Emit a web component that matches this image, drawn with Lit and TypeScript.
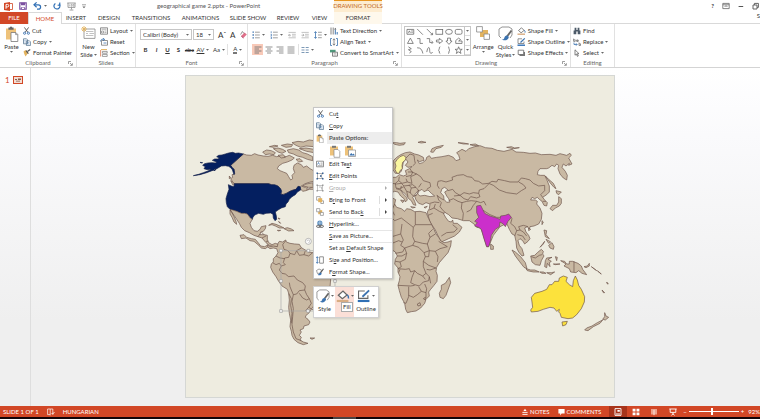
import { LitElement, html, svg, css, nothing } from "lit";
import { customElement, property } from "lit/decorators.js";
import { classMap } from "lit/directives/class-map.js";

const BLUE = "#3c73b0";
const TAN = "#e3b35e";

/* Icon artwork: [width, height, drawing] */
const ICONS: Record<string, [number, number, unknown]> = {
  logo: [9, 9, svg`<path d="M0 1 6 0v9L0 8z" fill="#d24726"/><path d="M6 1.5h2.5v6H6" fill="#fff" stroke="#d24726" stroke-width=".8"/><path d="M2 6.8V2.4h1.5a1.2 1.2 0 0 1 0 2.5H2" fill="none" stroke="#fff"/>`],
  save: [8, 8, svg`<path d="M.8.8h6.4v6.4H.8z" fill="#fff" stroke="#7b4fa0" stroke-width="1.2"/><path d="M2 .8h4v2.4H2zM2.3 5h3.4v2.4H2.3z" fill="#7b4fa0"/><path d="M3 5.6h2v1.4H3z" fill="#fff"/>`],
  undo: [9, 8, svg`<path d="M1.4 2.8h4a2.1 2.1 0 0 1 0 4.4H4" fill="none" stroke="#2f6fb5" stroke-width="1.2"/><path d="M3.6.4 1 2.8l2.6 2.4" fill="none" stroke="#2f6fb5" stroke-width="1.2"/>`],
  redo: [8, 8, svg`<path d="M2.4 1.4A3 3 0 1 0 6 1.8" fill="none" stroke="#2f6fb5" stroke-width="1.2"/><path d="M4.6 3.2h2.2V.4" fill="none" stroke="#2f6fb5" stroke-width="1.1"/>`],
  show: [9, 9, svg`<path d="M.3 1h8.400M1 1v4.400h7V1M4.500 5.400v2M2.600 8h3.800" fill="none" stroke="#888" stroke-width=".8"/><path d="M2.400 2.400v1.800M4 2.400h1v1.800H4zM6 2.400h1v1.800H6z" fill="none" stroke="#888" stroke-width=".5"/>`],
  more: [4, 5, svg`<path d="M0 .8h4" stroke="#777" stroke-width=".7"/><path d="M.4 2.400h3.200L2 4.200z" fill="#666"/>`],
  caret: [3, 2, svg`<path d="M0 0h3L1.500 1.800z" fill="#666"/>`],
  ribbonopt: [8, 8, svg`<path d="M.8 1.400h6.400v5.200H.8zM.8 2.800h6.400" fill="none" stroke="#666" stroke-width=".8"/><path d="M2.600 5 4 3.600 5.400 5" fill="none" stroke="#666" stroke-width=".8"/>`],
  minimize: [6, 8, svg`<path d="M.6 4.500h4.600" stroke="#555"/>`],
  restore: [7, 8, svg`<path d="M1 3h4v4H1zM2.400 3V1.400h4v4H5" fill="none" stroke="#555" stroke-width=".9"/>`],
  paste: [14, 16, svg`<path d="M1 2.500h10v11H1z" fill="#eec27a"/><path d="M3.400 1.400h1.400a1.300 1.300 0 0 1 2.400 0h1.400v2.400H3.400z" fill="#666"/><path d="M6 6.500h4.800l2 2v7H6z" fill="#fff" stroke="#777" stroke-width=".8"/><path d="M10.600 6.600v2h2" fill="none" stroke="#777" stroke-width=".7"/>`],
  cut: [7, 8, svg`<path d="M1.400.4 4.800 5.200M5.600.4 2.200 5.200" stroke="#555" stroke-width=".9"/><circle cx="1.600" cy="6.200" r="1.100" fill="none" stroke="${BLUE}" stroke-width=".9"/><circle cx="5.400" cy="6.200" r="1.100" fill="none" stroke="${BLUE}" stroke-width=".9"/>`],
  copy: [8, 8, svg`<path d="M.5.8h3l1 1v4h-4zM3.400 2.800h3l1 1v3.800h-4z" fill="#fff" stroke="#5b7894" stroke-width=".8"/><path d="M4.300 4.600h2M4.300 6h2M1.300 2.400h1.400M1.300 4h1.400" stroke="${BLUE}" stroke-width=".5"/>`],
  painter: [8, 8, svg`<path d="M.6 2.200 3 1l2 3-2.400 3.400C1.600 6 .8 4.200.6 2.200z" fill="${TAN}"/><path d="m3 1.600 2.400 3" stroke="#555" stroke-width="1.200"/><path d="m4.400 2.600 2.800-2" stroke="#555" stroke-width="1.200"/>`],
  newslide: [15, 13, svg`<path d="M3 3h11v9.400H3z" fill="#fff" stroke="#888" stroke-width=".8"/><path d="M5 5.500h7.400M8.500 7.500H13M5 9.500h7.400M5 7.500h2" stroke="#999" stroke-width=".6"/><path d="M3 0v6M0 3h6M1 1l4 4M5 1 1 5" stroke="${TAN}" stroke-width=".9"/>`],
  layout: [8, 8, svg`<path d="M.5.800h7v6.400h-7z" fill="#fff" stroke="#777" stroke-width=".8"/><path d="M1.500 2.200h5M1.500 4h2v2h-2zM4.500 4h2M4.500 5.600h2" fill="none" stroke="#777" stroke-width=".6"/>`],
  reset: [8, 8, svg`<path d="M1.500 2.500h6v4.700h-6z" fill="#fff" stroke="#777" stroke-width=".8"/><path d="M.400 3.500C.600 1.500 2.500.6 4.400 1.400M2.800 0l1.800 1.400L3 3M3.500 5h3" fill="none" stroke="${BLUE}" stroke-width=".8"/>`],
  section: [8, 8, svg`<path d="M1 .6h6" stroke="${TAN}"/><path d="M.6 1v6.500" stroke="#d9774e" stroke-width=".8"/><path d="M2.400 2.400h4.800v1.800H2.400zM2.400 5.400h4.800v2H2.400z" fill="#fff" stroke="#777" stroke-width=".7"/>`],
  clear: [8, 8, svg`<path d="M1.200 5 4.600 1.400l2.200 2L3.400 7z" fill="#e0708a"/><path d="M1.200 5 3.400 7" stroke="#b3486a"/><path d="m.6 3.500 1.800-3 1.600 2" fill="none" stroke="#666" stroke-width=".7"/>`],
  bullets: [8, 8, svg`<path d="M.500 1.200h1.400M.500 4h1.400M.500 6.800h1.400" stroke="${BLUE}" stroke-width="1.300"/><path d="M3 1.200h4.800M3 4h4.800M3 6.800h4.800" stroke="#888" stroke-width=".8"/>`],
  numbers: [8, 8, svg`<path d="M1.200.300v1.800M.6 3.300h1v1.500h-1M.6 6h1v1.800h-1" fill="none" stroke="${BLUE}" stroke-width=".7"/><path d="M3 1.200h4.800M3 4h4.800M3 6.800h4.800" stroke="#888" stroke-width=".8"/>`],
  outdent: [8, 8, svg`<path d="M.5 1.400h7.300M4 3.300h3.800M4 5h3.800M.5 6.800h7.300" stroke="#aaa" stroke-width=".7"/><path d="M3 4.200H.500M1.700 3 .5 4.200l1.200 1.200" fill="none" stroke="#999" stroke-width=".7"/>`],
  indent: [8, 8, svg`<path d="M.5 1.400h7.300M4 3.300h3.800M4 5h3.800M.5 6.800h7.300" stroke="#aaa" stroke-width=".7"/><path d="M.5 4.200H3M1.800 3 3 4.200 1.800 5.400" fill="none" stroke="#999" stroke-width=".7"/>`],
  spacing: [8, 8, svg`<path d="M1.500.8v6.400M.3 2 1.500.6 2.700 2M.3 6l1.200 1.400L2.700 6" fill="none" stroke="${BLUE}" stroke-width=".8"/><path d="M4 1.300h3.800M4 4h3.800M4 6.700h3.800" stroke="#888" stroke-width=".8"/>`],
  left: [8, 8, svg`<path d="M.5 1h7M.5 3h4.500M.5 5h7M.5 7h4.500" stroke="#777" stroke-width=".9"/>`],
  center: [8, 8, svg`<path d="M.5 1h7M2 3h4M.5 5h7M2 7h4" stroke="#777" stroke-width=".8"/>`],
  right: [8, 8, svg`<path d="M.5 1h7M3 3h4.500M.5 5h7M3 7h4.500" stroke="#777" stroke-width=".8"/>`],
  justify: [8, 8, svg`<path d="M.5 1h7M.5 3h7M.5 5h7M.5 7h7" stroke="#777" stroke-width=".8"/>`],
  columns: [8, 8, svg`<path d="M.5 1.500h3M.5 4h3M.5 6.500h3M4.700 1.500h3M4.700 4h3M4.700 6.500h3" stroke="#6d8dae" stroke-width=".9"/>`],
  textdir: [8, 8, svg`<path d="M1 .5v7M3.200.5v7" stroke="#777" stroke-width=".9"/><path d="M5.300 7.500v-5M7.200 7.500V5" stroke="${BLUE}"/><path d="m4.200 2.500 1-1.800 1.200 1.800" fill="#555"/>`],
  aligntext: [8, 8, svg`<path d="M2 .5H.5v7H2M6 .5h1.500v7H6" fill="none" stroke="${BLUE}" stroke-width=".8"/><path d="M4 .8v6.400M2.800 2.200 4 .8l1.200 1.400M2.800 5.800 4 7.200l1.200-1.400" fill="none" stroke="#666" stroke-width=".7"/>`],
  smartart: [8, 8, svg`<path d="M0 .8h5.600v2.600H0z" fill="#4d9a7c"/><path d="M2.500 3.200h5v4h-5z" fill="#fff" stroke="#666" stroke-width=".8"/><path d="M3.600 4.700h2.800M3.600 6h2.800" stroke="#777" stroke-width=".5"/>`],
  arrange: [14, 14, svg`<path d="M4 4h8v7H4z" fill="${TAN}"/><path d="M.6.6h5.800v5.400H.6zM8 8h5.500v5.400H8z" fill="#fff" stroke="#888" stroke-width=".8"/>`],
  quick: [15, 15, svg`<path d="M4 1h7l3 2v6l-2 3M3 12 1 10V3l3-2" fill="none" stroke="#888" stroke-width=".9"/><path d="m13.500 4.500-4.500 6" stroke="#666" stroke-width="1.800"/><path d="M9.600 9.600c-2-.3-3 1-3.500 3-.5 1-1.800 1-2.600.6 2 2 7 1.400 7.300-2.200z" fill="${BLUE}"/>`],
  fill: [9, 8, svg`<path d="M1.500 3.500 4.500.8l2.600 2.600-3 2.400z" fill="#fff" stroke="#666" stroke-width=".8"/><path d="M7.200 3.200c1 .8 1 1.600.8 2.400" fill="none" stroke="${BLUE}"/><path d="M.5 7.200h7.500" stroke="#d9ad83" stroke-width="1.400"/>`],
  outline: [9, 8, svg`<path d="M5 .8H1v4.700h6V3.500" fill="none" stroke="#666" stroke-width=".7"/><path d="M3.500 4.500 7.800.4" stroke="${BLUE}" stroke-width="1.200"/><path d="M.5 7.200h7.500" stroke="#2f6fb5" stroke-width="1.400"/>`],
  effects: [9, 8, svg`<path d="M2.500 3h5.500v4H2.500z" fill="#777"/><path d="M1.200 1.200h5.500v4.300H1.200z" fill="#fff" stroke="#666" stroke-width=".8"/>`],
  find: [8, 8, svg`<path d="M1.600.8h1.800v3H1.600zM4.600.8h1.800v3H4.600zM.6 3.500h2.700v3.700H.6zM4.700 3.500h2.700v3.700H4.700zM3 3h2v1.600H3z" fill="#4d5b69"/>`],
  replace: [8, 8, svg`<path d="M.6.600v2.800h1.600V1.800H.6M5 1.800v1.600H3.600V2H5v1.600M6 4.500v3h1.500V5.800H6" fill="none" stroke="#666" stroke-width=".7"/><path d="M1 4.500v2h3M3 5.300l1.200 1.200L3 7.700" fill="none" stroke="${BLUE}" stroke-width=".8"/>`],
  select: [8, 8, svg`<path d="M2 .8v5.400l1.400-1.200 1 2.400.9-.4-1-2.300H6z" fill="#fff" stroke="#666" stroke-width=".8"/>`],
  launcher: [5, 5, svg`<path d="M.5 3V.5H3M2 2l2 2M4.400 2.200v2.200H2.200" fill="none" stroke="#777" stroke-width=".7"/>`],
  edittext: [8, 8, svg`<path d="M.5 1.200h7v5.600h-7z" fill="#fff" stroke="#777" stroke-width=".8"/><path d="m1.500 4.500 1-2 1 2" fill="none" stroke="${BLUE}" stroke-width=".7"/><path d="M4.600 3h2M4.600 4.200h2M1.600 5.600h5" stroke="#888" stroke-width=".6"/>`],
  editpoints: [8, 8, svg`<path d="m1.500 1.500 5 0L5 4l1.500 2.500h-5z" fill="none" stroke="#777" stroke-width=".6"/><path d="M.5.5H2V2H.5zM6 .5h1.500V2H6zM.5 6H2v1.500H.5zM6 6h1.500v1.500H6zM4 3.200h1.500v1.500H4z" fill="#345e92"/>`],
  group: [8, 8, svg`<path d="M1.500 1.500h5v5h-5zM3 3h2.500v2.500" fill="none" stroke="#aaa" stroke-width=".7"/><path d="M.5.5H2V2H.5zM6 .5h1.500V2H6zM.5 6H2v1.500H.5zM6 6h1.500v1.500H6z" fill="#999"/>`],
  front: [8, 8, svg`<path d="M.6.6h3.600v3.600H.6zM4.800 4.800h2.700v2.700H4.800z" fill="#fff" stroke="#888" stroke-width=".7"/><path d="M2.200 2.200h4v4h-4z" fill="${TAN}"/>`],
  back: [8, 8, svg`<path d="M2.200 2.200h4v4h-4z" fill="${TAN}"/><path d="M.6.6h3.200v3.200H.6zM4.400 4.400h3v3h-3z" fill="#fff" stroke="#888" stroke-width=".7"/>`],
  link: [8, 8, svg`<circle cx="3.800" cy="3" r="2.600" fill="#5b8fbe"/><path d="M1.300 3h5M3.800.5v5" stroke="#dce9f4" stroke-width=".5"/><path d="M1.600 5.300h1.800a1 1 0 0 1 0 2H1.600a1 1 0 0 1 0-2zM4.600 5.300h1.800a1 1 0 0 1 0 2H4.600a1 1 0 0 1 0-2z" fill="#fff" stroke="#444" stroke-width=".8"/>`],
  size: [8, 8, svg`<path d="M3.600.8h3.800v6.400H3.600z" fill="#fff" stroke="#777" stroke-width=".8"/><path d="M1.300 1v6M.3 2 1.300.6 2.300 2M.3 6l1 1.400L2.300 6" fill="none" stroke="${BLUE}" stroke-width=".8"/>`],
  format: [8, 8, svg`<path d="M.5 2.500 3 1l2.500 1-1 3-3 .5z" fill="#fff" stroke="#777" stroke-width=".7"/><path d="M7.500.8 4.500 5" stroke="#555" stroke-width="1.100"/><path d="M4.700 4.500C3 4.500 3.400 6.600 1.600 6.800 3.400 8 5.600 7 5.700 5.500z" fill="${BLUE}"/>`],
  pastepic: [12, 13, svg`<path d="M1 1.500h8v9H1z" fill="#eec27a"/><path d="M3 .8h4v2H3z" fill="#777"/><path d="M4.500 5h7v6.500h-7z" fill="#fff" stroke="#888" stroke-width=".7"/><path d="m5.200 10.500 2-2.500 1.500 1.500 1-1 1.200 2z" fill="${BLUE}"/>`],
  pastekeep: [12, 13, svg`<path d="M1 1.500h8v9H1z" fill="#eec27a"/><path d="M3 .8h4v2H3z" fill="#777"/><path d="M5 4.500h4l1.800 1.800v6H5z" fill="#fff" stroke="#888" stroke-width=".7"/>`],
  spell: [8, 8, svg`<path d="M.6 1h2.600v5.600H.6zM3.200 1h2.600v5.600M3.200 6.600v.8" fill="none" stroke="#fff" stroke-width=".7"/><path d="m4.600 5 1 1.200L7.500 4" fill="none" stroke="#fff" stroke-width=".8"/>`],
  notes: [6, 8, svg`<path d="M3 .8 4.600 3H1.400z" fill="#fff"/><path d="M.4 4.400h5.200M.4 6.400h5.200" stroke="#fff" stroke-width=".9"/>`],
  comment: [7, 8, svg`<path d="M.4 1h6.200v4.600H3.600L2.200 7.500V5.600H.4z" fill="#fff"/>`],
  normal: [8, 8, svg`<path d="M1 .6h6v6.800H1z" fill="none" stroke="#fff" stroke-width=".9"/><path d="M3.400 2h2.400v1.800H3.400zM2 5.500h4v.9H2z" fill="#fff"/>`],
  sorter: [8, 8, svg`<path d="M.6.800h2.900v2.700H.6zM4.500.800h2.900v2.700H4.500zM.6 4.500h2.900v2.700H.6zM4.500 4.500h2.900v2.700H4.500z" fill="#fff"/>`],
  reading: [8, 8, svg`<path d="M1 1h2.400L4 1.500 4.600 1H7v5.600H4.600L4 7.200l-.6-.6H1z" fill="#eda08b"/><path d="M4 1.500v5.700" stroke="#fff" stroke-width=".7"/>`],
  play: [8, 8, svg`<path d="M.3 1h7.400M1.200 1v3.400h5.600V1M4 4.400V6.600M2.400 7.300 4 5.800l1.600 1.500" fill="none" stroke="#fff" stroke-width=".9"/>`],
};

const icon = (name: string) => {
  const [w, h, art] = ICONS[name];
  return html`<svg class="ico" width=${w} height=${h} viewBox="0 0 ${w} ${h}" aria-hidden="true">${art}</svg>`;
};
const drop = icon("caret");

const sharedStyles = css`
  :host { font-family: Lato, "Open Sans", sans-serif; font-size: 6px; line-height: 8px; color: #333; }
  * { box-sizing: border-box; }
  button, select, input { font: inherit; color: inherit; margin: 0; padding: 0; border: 0; background: none; border-radius: 0; }
  button { display: flex; align-items: center; white-space: nowrap; }
  .ico { display: block; flex: none; }
`;

/* ---------- World map ---------- */

const line = (d: string) => svg`<path class="border" d=${d} />`;

@customElement("world-map")
class WorldMap extends LitElement {
  static styles = css`
    :host { display: block; }
    .map { display: block; width: 100%; height: auto; }
    path { fill: #c9b9a3; stroke: #6b5148; stroke-width: 2; stroke-linejoin: round; }
    .border { fill: none; }
    .sea { fill: #eeece0; }
    .navy { fill: #041f60; stroke: #14204a; }
    .pale { fill: #fbf7a0; }
    .magenta { fill: #cb2fcb; }
    .yellow { fill: #fce23c; }
    .frame { fill: none; stroke: #a9a9a9; stroke-width: 2; }
    .knob { fill: #fff; stroke: #9a9a9a; stroke-width: 2; }
  `;
  render() {
    return html`<svg class="map" viewBox="186 76 428 321" role="img" aria-label="World map">
      <g transform="translate(186 130) scale(.33333)">
        <path d="M172 72 182 75 196 76 206 71 216 75 232 78 246 79 260 76 272 80 286 77 300 80 310 76 318 80 325 84 318 90 304 96 290 100 278 108 274 116 282 122 292 126 302 130 308 140 314 150 320 146 318 136 326 128 322 116 324 106 334 99 346 104 352 112 362 108 372 116 390 126 390 152 366 158 356 162 346 168 356 172 366 168 362 178 370 176 390 162 390 178 370 178 360 182 350 184 343 176 338 170 330 178 316 182 300 190 288 194 284 186 280 176 272 168 260 166 248 161 145 161 140 156 134 146 140 142 138 134 146 132 144 118 138 112 134 106Z" />
        <path d="M134 152 142 158 148 166 140 164ZM130 138 134 144 130 146ZM350 168 360 162 372 160 380 158 382 172 368 172Z" />
        <path d="M230 66 242 60 256 62 268 68 264 74 250 72 238 74ZM262 56 276 54 290 58 300 64 288 70 276 66ZM286 46 304 42 320 44 316 50 300 52ZM304 60 322 56 338 60 350 68 364 72 380 80 380 92 364 88 350 82 334 78 322 72 308 68ZM318 38 336 34 352 36 370 30 384 32 384 50 360 48 344 52 330 46ZM340 56 360 54 384 58 384 68 362 64ZM330 88 342 86 350 94 338 96ZM250 50 266 46 276 48 262 52ZM276 76 292 74 298 82 286 84Z" />
        <path class="navy" d="M172 72 158 69 148 70 140 67 128 69 118 72 108 75 98 76 92 80 100 84 96 87 86 87 79 91 86 94 92 96 88 99 78 98 66 99 56 101 50 106 58 110 54 116 64 119 76 117 66 123 52 128 38 133 22 137 42 134 62 128 78 122 86 120 96 114 106 108 118 107 128 109 134 113 139 119 142 128 144 134 146 130 144 118 138 112 134 106ZM84 118 90 116 86 123ZM42 97 50 98 46 99Z" />
        <path class="navy" d="M145 161H248L256 164 266 164 276 168 284 176 287 184 284 192 292 194 302 190 312 184 322 180 330 178 336 169 343 170 344 180 334 186 328 194 318 200 310 208 306 216 300 222 298 230 286 234 276 240 268 246 271 258 272 268 267 272 262 264 261 253 254 249 240 250 232 253 218 250 206 255 201 262 199 268 193 264 184 252 176 250 166 250 152 244 140 240 132 238 124 230 121 218 120 206 124 192 129 178 127 164 136 168 144 170Z" />
        <path d="M132 239 140 240 152 244 166 250 176 250 184 252 193 264 199 268 192 280 196 292 204 302 214 304 222 298 226 290 240 287 238 296 232 304 224 306 222 314 234 314 244 316 244 328 248 338 258 344 268 340 280 344 274 352 262 350 250 346 240 338 228 324 216 320 204 316 190 308 176 302 166 292 160 280 152 268 144 256ZM132 240 138 248 144 260 150 274 152 283 144 276 138 262 132 252Z" />
        <path d="M248 286 258 280 270 283 284 289 294 294 280 294 268 288 258 284ZM294 296 304 293 316 297 324 302 308 303ZM274 301 284 301 278 303ZM276 264 282 266 280 268ZM278 274 284 280 280 278Z" />
        ${line("M216 320 222 312M226 306 234 314M228 324 240 318M240 334 246 334")}
      </g>
      <g transform="translate(240 230) scale(.33333)">
        <path d="M82 44 90 50 100 48 112 50 114 40 118 34 128 36 137 30 139 36 150 40 164 42 178 43 184 53 196 60 206 66 218 68 240 76 262 88 296 98 298 110 286 130 272 148 270 172 252 184 240 200 228 218 214 238 206 250 198 256 196 262 204 268 210 276 206 284 192 288 190 296 180 300 184 306 178 316 184 322 180 330 190 336 204 340 190 344 174 338 162 328 156 316 154 304 150 290 152 270 148 250 146 232 148 210 146 190 142 178 126 168 116 154 108 140 98 126 92 112 94 102 100 96 100 86 108 78 114 68 110 56 100 54 90 56 82 50ZM210 324 224 324 216 328Z" />
        <path d="M0 16 12 14 20 22 34 26 46 28 56 40 62 48 74 50 82 46 84 50 76 56 64 54 54 44 42 34 30 32 18 24 4 26Z" />
        ${line("M137 32 128 44 132 58 144 62 150 70 146 82 134 84 130 98 136 104 124 108 118 120 126 130 136 132 146 140 162 138 172 150 188 158 196 168 194 180 178 182 170 192 160 194 154 180 150 170 148 158M150 70 164 74 170 62 184 54M170 62 178 76 192 74 196 62M192 74 206 78 218 68M108 78 120 84 134 86M98 98 108 104 118 100 124 108M160 194 156 214 160 236 158 260 156 284 160 306 168 326 184 332M194 180 200 194 208 206 200 210 188 204 178 190M208 206 214 220 206 232 196 242M146 190 154 206 152 226 156 250 154 280M206 232 220 240")}
        <path class="frame" d="M123 62H285V243H123Z" />
        <circle class="knob" cx="205" cy="34" r="9" />
        <path class="frame" d="M201 34a4 4 0 1 1 4 4" />
        <path class="knob" d="M119 58h8v8h-8zM201 58h8v8h-8zM119 149h8v8h-8zM281 149h8v8h-8zM119 239h8v8h-8zM200 239h8v8h-8z" />
      </g>
      <g transform="translate(380 130) scale(.33333)">
        <path d="M40 92 50 82 62 74 76 68 90 66 104 72 116 75 130 82 132 91 118 95 112 90 118 101 128 98 138 90 140 82 148 77 154 85 170 82 186 80 206 76 220 82 228 92 240 88 236 76 230 68 246 58 258 64 266 56 284 50 300 47 316 53 336 55 352 61 372 64 384 61 396 58 408 66 430 67 450 70 466 69 484 74 510 73 528 76 540 71 560 76 570 70 574 76 566 84 576 102 566 106 568 100 558 108 550 102 546 112 556 124 562 136 560 150 550 144 540 132 534 116 536 106 530 102 524 110 516 106 506 114 500 116 480 116 474 124 472 134 482 136 494 136 500 148 508 168 508 186 500 194 488 202 494 210 502 218 500 228 492 226 486 214 478 208 472 202 464 206 456 202 452 210 466 210 472 214 470 222 480 234 486 250 484 268 476 282 462 288 450 290 448 298 442 290 434 294 438 306 446 316 450 326 444 334 434 342 428 332 420 326 414 332 418 346 426 356 432 376 426 378 416 366 410 354 408 334 404 316 396 312 388 298 380 280 360 290 340 316 326 350 320 350 308 310 302 294 290 292 282 282 268 272 250 272 232 266 216 264 206 254 196 248 190 250 198 264 206 274 214 276 218 270 220 280 232 280 246 292 238 306 224 318 206 326 184 336 178 326 166 300 150 276 144 256 142 246 148 236 150 222 138 218 128 224 116 220 108 210 104 198 112 192 116 180 106 192 98 202 104 214 108 226 100 224 94 212 86 206 80 196 70 186 62 180 70 192 80 202 82 210 76 216 72 206 62 198 54 186 44 184 30 190 20 170 30 142 48 142 58 134 70 138 80 134 76 122 88 116 96 110 84 112 76 106 84 96 78 88 70 96 68 108 64 124 56 130 46 130 38 118Z" />
        <path class="pale" d="M52 88 60 80 70 76 78 82 76 90 68 97 66 107 67 116 60 122 58 130 50 129 45 118 48 108 45 98Z" />
        <path class="sea" d="M116 184 126 178 132 185 144 180 154 190 164 198 150 200 134 196 120 198 113 192ZM186 176 194 172 204 180 194 186 200 198 206 206 210 216 200 217 192 208 191 198 182 188Z" />
        <path d="M152 66 156 56 168 51 190 46 184 52 168 56 160 67ZM38 38 50 38 60 40 76 38 72 44 58 46 44 43ZM114 37 124 34 138 37 124 39ZM234 38 250 39 266 42 250 42ZM270 44 286 42 296 47 280 47ZM380 52 394 50 404 54 418 53 400 56ZM62 210 72 212 68 218ZM92 230 106 232 98 234ZM132 232 142 229 136 234Z" />
        ${line("M78 84 90 72 102 76 104 92 106 100 98 108M90 116 96 126 110 132 122 140 130 152 150 158 152 170 140 178M84 126 98 126 94 136 78 140M58 140 56 152 66 160 82 156 96 160 92 140 110 132M36 160 50 162 64 160 72 168 88 166 94 174 108 172 116 182M94 174 90 188 100 198 110 196M56 152 46 160 48 174 58 176 72 170M72 170 80 184 92 188M124 160 116 172M48 176 62 180M86 166 98 164 108 172M82 156 78 146M64 168 62 178M80 184 84 200")}
        ${line("M178 176 172 166 174 154 184 152 198 156 218 150 216 142 232 136 250 134 262 140 276 142 284 152 296 154 308 162 326 160 336 154 350 156 354 148 374 152 390 156 414 156 424 144 436 146 450 150 460 160 476 168 494 166 494 182 482 194 488 202M326 160 340 166 358 180 380 188 410 192 424 182 438 174 430 164 416 156M204 182 218 178 226 188 240 196 252 188 268 192 280 188 296 190 298 180 312 176 326 162M222 198 240 196 252 206 264 210 272 200 290 204 300 200 296 190M206 212 220 206 234 214 246 218 260 214 274 212 290 214 302 218 312 214 318 226M246 218 244 234 250 250 248 270M260 246 272 240 280 226 290 214M172 196 176 210 184 218 180 230 188 240 196 248M150 220 164 216 178 218M148 240 162 234 166 222M162 234 178 244 192 250M144 256 158 250M184 318 200 308 222 306 232 296 218 284M170 196 184 206 192 210M308 240 330 254 350 262 370 262 384 256M488 214 498 214M386 256 396 266 392 280 404 290 410 302 420 300 430 306 440 318M410 302 404 318M420 300 416 290 430 286 444 290M412 314 428 318 436 330")}
        <path class="magenta" d="M290 228 302 226 308 238 314 250 330 258 350 264 360 268 362 258 376 256 386 252 394 262 384 274 376 290 370 282 360 276 358 290 346 298 334 316 332 330 326 350 320 350 312 326 304 298 296 292 284 288 292 278 284 274 296 262 290 248Z" />
        <path d="M496 138 506 148 520 160 528 176 522 172 510 158ZM528 182 544 186 536 194 530 190ZM536 200 544 206 544 220 538 228 526 234 518 242 510 236 518 226 530 226 536 216ZM486 272 490 276 486 284ZM446 294 452 298 446 302Z" />
      </g>
      <g transform="translate(380 220) scale(.33333)">
        <path d="M0-66 38-66 47-61 44-48 50-38 64-34 74-26 80-34 92-32 104-25 120-26 138-22 146-4 154 12 162 28 168 42 176 52 182 62 192 68 204 66 214 62 212 78 204 98 190 114 178 128 170 142 168 154 172 166 171 184 162 196 152 208 146 216 148 228 138 238 134 250 122 264 108 273 94 275 82 278 77 268 74 250 64 232 58 212 54 196 58 182 60 170 54 156 54 144 44 132 46 118 52 108 46 96 36 90 0 96Z" />
        <path d="M208 172 212 188 206 204 198 226 190 236 180 232 178 220 184 208 184 196 196 190ZM332 72 340 78 340 88 332 88Z" />
        ${line("M106-24V14L154 14M106 14 100 22 64-6 44 2 36-6M100 22 98 50 104 64 98 76 74 84 68 96 46 100M36 50 62 42 66 12M62 42 70 60 62 76 74 84M36 70 56 62 66 66M98 76 116 82 132 98 148 92 142 72 150 52 166 42M104 64 128 70 142 72M148 92 166 94 180 86 202 80 176 64M166 94 174 110 172 126M132 98 136 110 130 124 146 136 168 144M148 92 146 110 136 110M74 84 80 100 76 118 60 126 46 124M60 126 64 140 54 146 76 148 88 146 92 156 104 152 112 160 128 168 138 160 130 140 130 124M52 108 66 108 80 100M104 152 96 172 92 188 104 194 118 198 130 186 146 182 148 170 138 160M128 168 136 178M148 170 152 190M54 196 92 198 104 196M86 200V230L78 250 70 248M86 226 100 232 112 224 124 214 116 200M124 214 138 218 140 206 134 192M138 218 138 234M56 158 60 148M44-48 36-30 44-14M168 144 150 150 140 148M150 52 146 40 158 28")}
        <path class="border" d="M112 252 120 248 122 256 114 258ZM130 236 136 232 136 240Z" />
      </g>
      <g transform="translate(490 220) scale(.33333)">
        <path d="M66 90 76 96 92 110 106 128 111 146 102 142 88 124 76 108ZM108 146 122 150 134 150 148 156 130 156 112 152ZM122 108 134 106 142 98 154 88 160 94 158 102 162 108 154 122 150 136 136 134 126 126ZM166 122 170 114 186 112 174 118 184 124 178 128 180 140 172 130 170 143 164 140ZM162 30 170 32 168 44 178 56 166 50ZM168 58 176 62 182 66 176 70ZM176 76 186 68 192 80 190 88 180 84ZM164 64 160 72 150 82 158 72ZM212 122 224 124 230 132 238 132 238 124 248 124 264 130 274 138 278 148 290 164 276 160 266 152 258 158 242 156 238 146 222 138 228 132ZM150 156 160 156 168 160 156 160ZM170 158 184 158 194 156 182 164ZM196 110 202 112 200 122ZM190 132 210 132 196 134ZM282 140 292 138 298 130 298 138 288 143ZM304 140 312 146 320 152ZM322 152 334 162 330 160ZM350 186 355 192 352 192ZM336 210 344 218 340 218Z" />
        ${line("M252 124V156M124 110 136 114 148 106 156 104")}
        <path class="yellow" d="M256 168 262 180 266 196 274 208 284 230 283 246 274 266 260 284 248 294 234 296 214 292 210 280 206 276 208 268 200 274 192 264 180 262 160 268 144 274 124 276 122 270 128 262 126 246 124 232 134 220 156 214 170 208 178 194 186 194 194 184 206 184 208 174 220 168 232 172 228 184 238 194 248 200 250 182ZM216 306 232 304 228 314 218 318Z" />
        <path d="M344 278 348 288 356 292 346 300 338 298 344 290ZM338 300 330 310 310 320 294 332 284 330 290 324 306 318 322 308Z" />
      </g>
    </svg>`;
  }
}

/* ---------- Context menu ---------- */

interface MenuEntry { key: string; rest: string; pre?: string; icon?: string; rule?: boolean; sub?: boolean; off?: boolean; split?: boolean }

const MENU: MenuEntry[] = [
  { pre: "Edit Te", key: "x", rest: "t", icon: "edittext", rule: true },
  { key: "E", rest: "dit Points", icon: "editpoints" },
  { key: "G", rest: "roup", icon: "group", rule: true, sub: true, off: true },
  { pre: "B", key: "r", rest: "ing to Front", icon: "front", sub: true, split: true },
  { pre: "Send to Bac", key: "k", rest: "", icon: "back", sub: true, split: true },
  { key: "H", rest: "yperlink...", icon: "link", rule: true },
  { key: "S", rest: "ave as Picture...", rule: true },
  { pre: "Set as ", key: "D", rest: "efault Shape", rule: true },
  { pre: "Si", key: "z", rest: "e and Position...", icon: "size" },
  { pre: "F", key: "o", rest: "rmat Shape...", icon: "format" },
];

@customElement("shape-menu")
class ShapeMenu extends LitElement {
  static styles = [sharedStyles, css`
    :host { display: block; }
    .menu { background: #fff; border: 1px solid #c6c6c6; box-shadow: 1px 1px 2px #00000033; width: 80px; }
    .item { display: grid; grid-template-columns: 15px 1fr auto; align-items: center; width: 100%; height: 12px; text-align: left; position: relative; }
    .slot { display: grid; place-items: center; padding-right: 3px; }
    .rule::before { content: ""; position: absolute; top: 0; left: 15px; right: 0; border-top: 1px solid #e6e6e6; }
    .off { color: #aaa; }
    .head { font-weight: 700; color: #555; background: linear-gradient(90deg, #fff 13px, #ededed 13px); }
    .paste { display: flex; gap: 3px; height: 14px; padding-left: 15px; align-items: center; }
    .tail { display: flex; align-items: center; height: 8px; padding: 0 5px; }
    .split { border-left: 1px solid #ddd; }
    .mini { display: grid; grid-template-columns: 21px 19px 24px; background: #fff; border: 1px solid #d0d0d0; box-shadow: 1px 1px 2px #00000022; width: 66px; height: 32px; margin-top: 7px; position: relative; }
    .tool { flex-direction: column; justify-content: space-between; padding: 2px 0 4px; }
    .hot { background: #fbdfd7; }
    .pic { display: flex; align-items: center; gap: 1px; }
    .tip { position: absolute; left: 27px; top: 15px; background: #fff; border: 1px solid #aaa; padding: 0 1px; }
  `];
  entry(e: MenuEntry) {
    return html`<button role="menuitem" class=${classMap({ item: true, rule: !!e.rule, off: !!e.off })} ?disabled=${e.off}>
      <span class="slot">${e.icon ? icon(e.icon) : nothing}</span><span>${e.pre ?? ""}<u>${e.key}</u>${e.rest}</span>
      ${e.sub ? html`<span class=${classMap({ tail: true, split: !!e.split })}><svg class="ico" width="2" height="4" viewBox="0 0 2 4"><path d="M0 0v4l2-2z" fill=${e.off ? "#aaa" : "#444"} /></svg></span>` : nothing}
    </button>`;
  }
  render() {
    return html`<div class="menu" role="menu">
        ${this.entry({ pre: "Cu", key: "t", rest: "", icon: "cut" })}
        ${this.entry({ key: "C", rest: "opy", icon: "copy" })}
        <div class="item head"><span class="slot"><svg class="ico" width="8" height="9" viewBox="0 0 14 16">${ICONS.paste[2]}</svg></span><span>Paste Options:</span></div>
        <div class="paste"><button aria-label="Use destination theme">${icon("pastekeep")}</button><button aria-label="Picture">${icon("pastepic")}</button></div>
        ${MENU.map((e) => this.entry(e))}
      </div>
      <div class="mini" role="toolbar">
        <button class="tool"><span class="pic"><svg class="ico" width="14" height="14" viewBox="0 0 15 15">${ICONS.quick[2]}</svg>${drop}</span>Style</button>
        <button class="tool hot" aria-label="Fill"><span class="pic"><svg class="ico" width="14" height="14" viewBox="0 0 9 8">${ICONS.fill[2]}</svg>${drop}</span></button>
        <button class="tool"><span class="pic"><svg class="ico" width="14" height="14" viewBox="0 0 9 8">${ICONS.outline[2]}</svg>${drop}</span>Outline</button>
        <span class="tip" role="tooltip">Fill</span>
      </div>`;
  }
}

/* ---------- Ribbon ---------- */

@customElement("ribbon-group")
class RibbonGroup extends LitElement {
  @property() name = "";
  @property({ type: Boolean }) launcher = false;
  static styles = [sharedStyles, css`
    :host { display: grid; grid-template-rows: 35px 8px; border-right: 1px solid #e1e1e1; min-width: 0; }
    .body { display: flex; min-width: 0; }
    .foot { display: grid; grid-template-columns: 8px 1fr 8px; text-align: center; color: #666; align-items: center; }
  `];
  render() {
    return html`<div class="body"><slot></slot></div>
      <div class="foot"><span></span><span>${this.name}</span>${this.launcher ? html`<button aria-label="${this.name} settings">${icon("launcher")}</button>` : nothing}</div>`;
  }
}

const SHAPES = svg`<g fill="none" stroke="#666" stroke-width=".8">
  <path d="M1.500 2.500h7v5h-7zM3 6l1-2 1 2M6 4h1.500M6 5.500h1.500"/><path d="m12 2 6 6M22 2l6 6M28 6v2h-2"/>
  <rect x="31.500" y="2.500" width="7" height="5"/><ellipse cx="45" cy="5" rx="3.500" ry="2.600"/><rect x="51.500" y="2.500" width="7" height="5" rx="1.500"/>
  <path d="m5 11.500 3 5.500H2zM12 12h3v5h3M22 12h3v4h3M27 14.500l1.500 1.500-1.500 1.500M32 13.500h3v-1.700l3.500 2.700-3.500 2.700v-1.700h-3zM43.500 11.500h3v3h1.700L45 18l-3.200-3.500h1.700zM52 17v-3l3-2.500 2 1.500-2 1.500h3.500V17z"/>
  <path d="m3 20.500 3 2-3 1 3 2-2 1.500M12 21.500c4 0 5 2 6 6M22 26c1-6 3-6 3-2s2 4 3 2M36 20.500c-2 0 0 3-2 3.500 2 .5 0 3.500 2 3.500M44 20.500c2 0 0 3 2 3.500-2 .5 0 3.500-2 3.500"/>
  <path d="m55 20.500 1 2.600h2.700l-2.100 1.600.8 2.700-2.400-1.600-2.400 1.600.8-2.700-2.100-1.600H54z"/></g>`;

const TABS = ["FILE", "HOME", "INSERT", "DESIGN", "TRANSITIONS", "ANIMATIONS", "SLIDE SHOW", "REVIEW", "VIEW"];

@customElement("app-root")
class AppRoot extends LitElement {
  static styles = [sharedStyles, css`
    :host { display: flex; flex-direction: column; min-height: 100vh; background: #fff; overflow: hidden; }
    .title { display: grid; grid-template-columns: 157px 177px 48px 1fr; height: 12px; }
    .quick { display: flex; align-items: center; padding-left: 4px; gap: 6px; }
    .quick button { gap: 2px; }
    .caption { padding-top: 2px; color: #555; white-space: nowrap; }
    .context { background: #fdecd0; border-top: 1px solid #e8951f; color: #c26a1d; white-space: nowrap; padding-top: 1px; display: flex; justify-content: center; }
    .window { display: flex; justify-content: flex-end; align-items: center; gap: 8px; padding-right: 1px; }
    .window button { font-weight: 700; }
    .tabs { display: grid; grid-template-columns: 28px 34px 28px 38px 46px 53px 42px 38px 25px 2px 48px 1fr; height: 12px; border-bottom: 1px solid #d9d9d9; }
    .tab { justify-content: center; }
    .file { background: #d24726; color: #fff; }
    .active { color: #d24726; background: #fff; border: 1px solid #d9d9d9; border-bottom: 0; height: 12px; }
    .format { background: #fef8ec; }
    .account { text-align: right; }
    .ribbon { display: grid; grid-template-columns: 77px 59px 112px 154px 169px 44px 1fr; height: 44px; border-bottom: 1px solid #d4d4d4; }
    .big { flex-direction: column; width: 23px; padding-top: 2px; }
    .big .ico { margin-bottom: auto; }
    .big .txt { display: flex; align-items: center; gap: 1px; height: 8px; }
    .big .txt .ico { margin: 0; }
    .big .under { height: 8px; display: grid; place-items: center; }
    .stack { display: grid; grid-template-rows: repeat(3, 11px); padding-top: 1px; align-items: center; justify-items: start; }
    .edit { padding-left: 2px; }
    .cmd { gap: 2px; }
    .wide { width: 23px; }
    .rows { display: grid; grid-template-rows: 15px 15px; padding: 3px 0 0 4px; }
    .row { display: flex; align-items: center; }
    .fonts { gap: 1px; }
    .pick { display: flex; align-items: center; height: 11px; border: 1px solid #c6c6c6; padding: 0 2px; }
    .pick select { appearance: none; outline: 0; width: 43px; line-height: 8px; }
    .pick .points { width: 12px; }
    .grow { font-size: 8px; margin-left: 3px; }
    .marks { display: grid; grid-template-columns: repeat(5, 11px) 16px 16px 1fr; }
    .marks button, .aligns button { justify-content: center; gap: 2px; height: 11px; }
    .marks .color { border-left: 1px solid #e1e1e1; }
    .bold { font-weight: 700; }
    .italic { font-style: italic; }
    .under-mark { text-decoration: underline; }
    .strike { text-decoration: line-through; }
    .ink { border-bottom: 2px solid #777; line-height: 7px; }
    .para { width: 82px; }
    .aligns { display: grid; grid-template-columns: repeat(4, 11px) 19px; }
    .aligns .chosen { background: #f8c9b8; }
    .aligns .cols { border-left: 1px solid #e1e1e1; margin-left: 2px; }
    .lists { gap: 5px; }
    .lists button { gap: 2px; }
    .gallery { display: flex; border: 1px solid #c6c6c6; width: 67px; height: 30px; margin: 2px 1px 0 2px; }
    .scroll { display: grid; width: 7px; border-left: 1px solid #c6c6c6; }
    .scroll button { justify-content: center; border-bottom: 1px solid #dcdcdc; }
    .space { display: grid; grid-template-columns: 31px 1fr; flex: 1; background: linear-gradient(#fff, #fafafc 20%, #efefef 75%); }
    .thumbs { border-right: 1px solid #dedede; display: flex; gap: 3px; padding: 8px 0 0 5px; color: #d24726; font-size: 8px; align-items: flex-start; }
    .thumb { border: 1px solid #d24726; background: #f3ded4; width: 10px; height: 8px; display: grid; place-items: center; }
    .stage { display: grid; grid-template-columns: 155fr 428fr 146fr; padding: 8px 0; align-items: start; }
    .slide { grid-column: 2; position: relative; background: #eeece0; outline: 1px solid #d5d7d4; }
    .popup { position: absolute; left: 127px; top: 31px; }
    .status { display: flex; align-items: center; height: 11px; background: #d24726; color: #fff; padding-left: 3px; white-space: nowrap; }
    .status button { gap: 2px; height: 11px; justify-content: center; }
    .left { display: flex; gap: 8px; flex: 1; align-items: center; }
    .talk { display: flex; gap: 8px; margin-right: 8px; }
    .views { display: grid; grid-template-columns: 18px 18px 18px 19px; }
    .views .current { background: #a8341b; }
    .zoom { display: flex; align-items: center; gap: 2px; margin-left: 1px; }
    .zoom input { appearance: none; width: 50px; height: 8px; background: linear-gradient(#fff, #fff) center / 100% 1px no-repeat; }
    .zoom input::-webkit-slider-thumb { appearance: none; width: 2px; height: 7px; background: #fff; }
    .percent { margin-left: 4px; }
    .desk { height: 2px; background: #130408; display: grid; grid-template-columns: 333fr 23fr 404fr; }
    .desk span { grid-column: 2; background: #4b4242; }
  `];
  cmd(name: string, label: string, hasDrop = false) {
    return html`<button class="cmd">${icon(name)}<span>${label}</span>${hasDrop ? drop : nothing}</button>`;
  }
  render() {
    return html`
      <header class="title">
        <div class="quick">${icon("logo")}<button aria-label="Save">${icon("save")}</button><button aria-label="Undo">${icon("undo")}${drop}</button><button aria-label="Redo">${icon("redo")}</button><button aria-label="Start show">${icon("show")}</button><button aria-label="Customize">${icon("more")}</button></div>
        <div class="caption">geographical game 2.pptx - PowerPoint</div>
        <div class="context">DRAWING TOOLS</div>
        <div class="window"><button aria-label="Help">?</button><button aria-label="Ribbon options">${icon("ribbonopt")}</button><button aria-label="Minimize">${icon("minimize")}</button><button aria-label="Restore">${icon("restore")}</button></div>
      </header>
      <nav class="tabs">
        ${TABS.map((t) => html`<button class=${classMap({ tab: true, file: t === "FILE", active: t === "HOME" })}>${t}</button>`)}
        <span></span><button class="tab format">FORMAT</button><span class="account">S</span>
      </nav>
      <section class="ribbon">
        <ribbon-group name="Clipboard" launcher>
          <button class="big">${icon("paste")}<span class="txt">Paste</span><span class="under">${drop}</span></button>
          <div class="stack">${this.cmd("cut", "Cut")}${this.cmd("copy", "Copy", true)}${this.cmd("painter", "Format Painter")}</div>
        </ribbon-group>
        <ribbon-group name="Slides">
          <button class="big wide">${icon("newslide")}<span class="txt">New</span><span class="txt">Slide${drop}</span></button>
          <div class="stack">${this.cmd("layout", "Layout", true)}${this.cmd("reset", "Reset")}${this.cmd("section", "Section", true)}</div>
        </ribbon-group>
        <ribbon-group name="Font" launcher>
          <div class="rows">
            <div class="row fonts">
              <label class="pick"><select aria-label="Font"><option>Calibri (Body)</option></select>${drop}</label>
              <label class="pick"><select class="points" aria-label="Font size"><option>18</option></select>${drop}</label>
              <button class="grow" aria-label="Increase font size">A<sup>ˆ</sup></button><button class="grow" aria-label="Decrease font size">A</button><button class="grow" aria-label="Clear formatting">${icon("clear")}</button>
            </div>
            <div class="row marks">
              <button class="bold">B</button><button class="bold italic">I</button><button class="bold under-mark">U</button><button class="bold">S</button><button class="strike">abc</button>
              <button><span class="under-mark">AV</span>${drop}</button><button>Aa${drop}</button><button class="color"><span class="ink">A</span>${drop}</button>
            </div>
          </div>
        </ribbon-group>
        <ribbon-group name="Paragraph" launcher>
          <div class="rows para">
            <div class="row lists"><button aria-label="Bullets">${icon("bullets")}${drop}</button><button aria-label="Numbering">${icon("numbers")}${drop}</button><button aria-label="Decrease indent">${icon("outdent")}</button><button aria-label="Increase indent">${icon("indent")}</button><button aria-label="Line spacing">${icon("spacing")}${drop}</button></div>
            <div class="row aligns"><button class="chosen" aria-label="Align left">${icon("left")}</button><button aria-label="Center">${icon("center")}</button><button aria-label="Align right">${icon("right")}</button><button aria-label="Justify">${icon("justify")}</button><button class="cols" aria-label="Columns">${icon("columns")}${drop}</button></div>
          </div>
          <div class="stack">${this.cmd("textdir", "Text Direction", true)}${this.cmd("aligntext", "Align Text", true)}${this.cmd("smartart", "Convert to SmartArt", true)}</div>
        </ribbon-group>
        <ribbon-group name="Drawing" launcher>
          <div class="gallery"><svg class="ico" width="59" height="28" viewBox="0 0 60 29" aria-label="Shapes">${SHAPES}</svg>
            <div class="scroll"><button aria-label="Scroll up">${drop}</button><button aria-label="Scroll down">${drop}</button><button aria-label="More shapes">${drop}</button></div></div>
          <button class="big">${icon("arrange")}<span class="txt">Arrange</span><span class="under">${drop}</span></button>
          <button class="big">${icon("quick")}<span class="txt">Quick</span><span class="txt">Styles${drop}</span></button>
          <div class="stack">${this.cmd("fill", "Shape Fill", true)}${this.cmd("outline", "Shape Outline", true)}${this.cmd("effects", "Shape Effects", true)}</div>
        </ribbon-group>
        <ribbon-group name="Editing">
          <div class="stack edit">${this.cmd("find", "Find")}${this.cmd("replace", "Replace", true)}${this.cmd("select", "Select", true)}</div>
        </ribbon-group>
      </section>
      <main class="space">
        <aside class="thumbs">1<span class="thumb"><svg class="ico" width="6" height="4" viewBox="0 0 6 4"><path d="M0 1h2v1H0zM3 .5h3V2H3zM1.500 2.500h1V4h-1zM3.500 2.500h1V4h-1z" fill="#8b5a48" /></svg></span></aside>
        <div class="stage"><div class="slide"><world-map></world-map><shape-menu class="popup"></shape-menu></div></div>
      </main>
      <footer>
        <div class="status">
          <div class="left"><span>SLIDE 1 OF 1</span><button aria-label="Spelling">${icon("spell")}</button><span>HUNGARIAN</span></div>
          <div class="talk"><button>${icon("notes")}NOTES</button><button>${icon("comment")}COMMENTS</button></div>
          <div class="views"><button class="current" aria-label="Normal">${icon("normal")}</button><button aria-label="Slide sorter">${icon("sorter")}</button><button aria-label="Reading view">${icon("reading")}</button><button aria-label="Slide show">${icon("play")}</button></div>
          <div class="zoom"><button aria-label="Zoom out">−</button><input type="range" aria-label="Zoom" min="0" max="100" value="46" /><button aria-label="Zoom in">+</button></div>
          <span class="percent">92%</span>
        </div>
        <div class="desk"><span></span></div>
      </footer>`;
  }
}
